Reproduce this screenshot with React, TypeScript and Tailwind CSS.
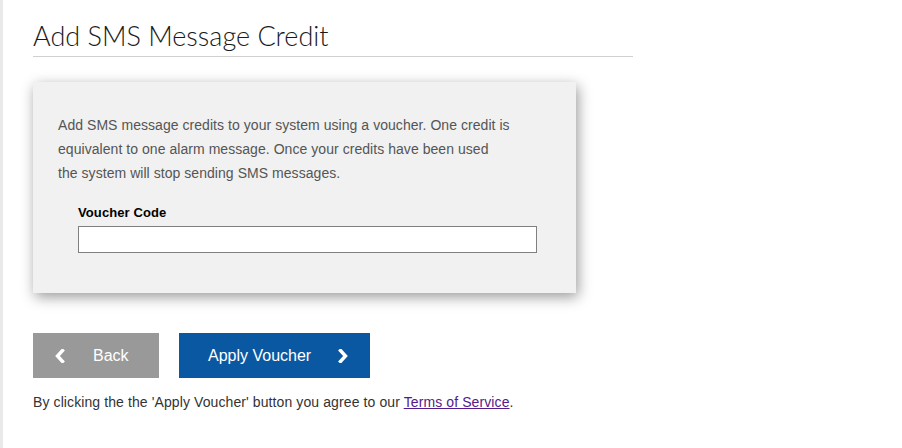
import React from "react";

function ChevronLeft() {
  return (
    <svg width="10" height="14" viewBox="0 0 10 14" className="block">
      <polyline points="7.5,1.5 2.5,7 7.5,12.5" fill="none" stroke="white" strokeWidth="3.4" strokeLinecap="square" strokeLinejoin="miter" />
    </svg>
  );
}

function ChevronRight() {
  return (
    <svg width="10" height="14" viewBox="0 0 10 14" className="block">
      <polyline points="2.5,1.5 7.5,7 2.5,12.5" fill="none" stroke="white" strokeWidth="3.4" strokeLinecap="square" strokeLinejoin="miter" />
    </svg>
  );
}

export default function App() {
  return (
    <div className="w-[902px] h-[448px] bg-white flex font-['Liberation_Sans',Arial,sans-serif] overflow-hidden">
      <div className="w-[3px] h-full bg-[#e9e9e9] shrink-0" />
      <div className="pl-[30px] pt-[19px] flex flex-col">
        <div className="w-[600px] border-b border-[#d0d0d0] pb-[4px]">
          <h1 className="font-['Lato',sans-serif] font-light text-[27px] leading-[33px] text-[#1a1a1a]">
            Add SMS Message Credit
          </h1>
        </div>
        <div className="mt-[25px] w-[543px] h-[211px] bg-[#f0f1f0] shadow-[2px_4px_13px_rgba(0,0,0,0.4)] pt-[31px] pl-[25px]">
          <p className="text-[14px] leading-[24px] text-[#555] whitespace-nowrap tracking-[0.05px]">
            Add SMS message credits to your system using a voucher. One credit is
            <br />
            equivalent to one alarm message. Once your credits have been used
            <br />
            the system will stop sending SMS messages.
          </p>
          <div className="pl-[20px] mt-[20px]">
            <label className="block text-[13px] leading-[15px] font-bold text-black tracking-[0.1px]">Voucher Code</label>
            <input type="text" className="mt-[6px] block w-[459px] h-[27px] bg-white border border-[#808080] outline-none" />
          </div>
        </div>
        <div className="mt-[40px] flex gap-[20px]">
          <button className="w-[126px] h-[45px] bg-[#999999] text-white text-[16px] flex items-center pl-[22px]">
            <ChevronLeft />
            <span className="ml-[28px]">Back</span>
          </button>
          <button className="w-[191px] h-[45px] bg-[#0b58a2] text-white text-[16px] flex items-center pl-[29px]">
            <span>Apply Voucher</span>
            <span className="ml-[27px]"><ChevronRight /></span>
          </button>
        </div>
        <p className="mt-[16px] text-[14px] leading-[16px] text-[#333] tracking-[0.1px]">
          By clicking the the 'Apply Voucher' button you agree to our{" "}
          <a href="#" className="text-[#551a8b] underline">Terms of Service</a>.
        </p>
      </div>
    </div>
  );
}
